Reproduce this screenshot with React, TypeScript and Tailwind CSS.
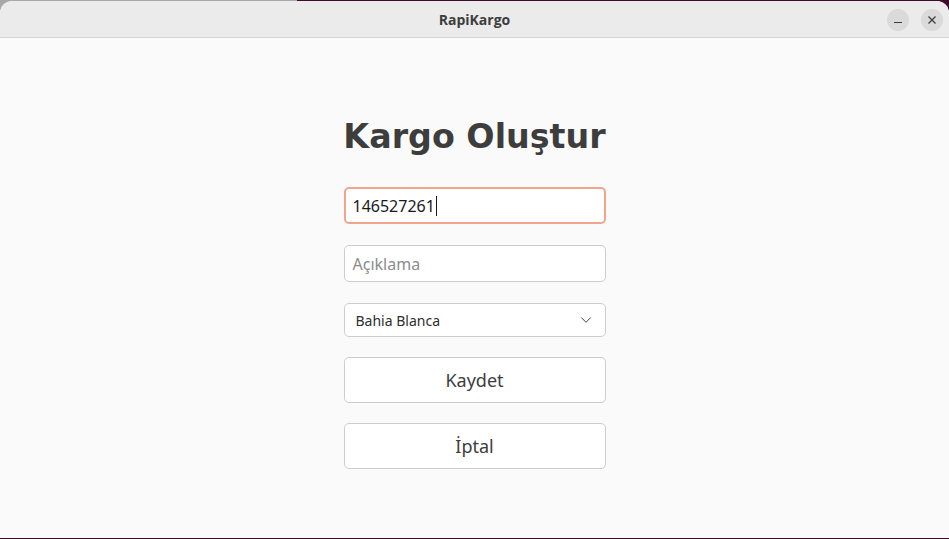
import { ChevronDown } from "lucide-react";

function TitleBar() {
  return (
    <div className="relative flex h-[37px] items-center justify-center rounded-t-[12px] border-b border-[#d6d6d6] bg-[#ebebeb]">
      <span className="text-[14px] font-bold text-[#3d3d3d] [font-family:'Open_Sans',sans-serif]">RapiKargo</span>
      <div className="absolute right-[6px] top-[8px] flex gap-[12px]">
        <div className="flex h-[22px] w-[22px] items-center justify-center rounded-full bg-[#dadada]">
          <div className="mt-[5px] h-[1px] w-[8px] bg-[#3d3d3d]" />
        </div>
        <div className="flex h-[22px] w-[22px] items-center justify-center rounded-full bg-[#dadada]">
          <svg width="10" height="10" viewBox="0 0 10 10" stroke="#3d3d3d" strokeWidth="1.3">
            <path d="M1.5 1.5 8.5 8.5M8.5 1.5 1.5 8.5" />
          </svg>
        </div>
      </div>
    </div>
  );
}

export default function App() {
  return (
    <div className="flex h-[539px] w-[949px] flex-col overflow-hidden bg-[linear-gradient(to_right,#a8a8a8_0_297px,#3b0d2a_297px)]">
      <div className="h-[1px] shrink-0" />
      <div className="flex flex-1 flex-col overflow-hidden rounded-t-[12px] bg-[#fafafa]">
        <TitleBar />
        <main className="flex flex-1 flex-col items-center pt-[79px]">
          <h1 className="text-[33.3px] leading-[40px] font-bold text-[#3d3d3d] [font-family:'DejaVu_Sans',sans-serif]">
            Kargo Oluştur
          </h1>
          <div className="mt-[30px] flex w-[262px] flex-col [font-family:'Noto_Sans',sans-serif]">
            <div className="flex h-[37px] items-center rounded-[5px] border-2 border-[#f2a58e] bg-white px-[7px] text-[16px] text-[#1a1a1a]">
              146527261
              <span className="ml-[1px] h-[20px] w-[1px] bg-[#1a1a1a]" />
            </div>
            <div className="mt-[21px] flex h-[37px] items-center rounded-[5px] border border-[#cdcdcd] bg-white px-[8px] text-[16px] text-[#8c8c8c]">
              Açıklama
            </div>
            <div className="mt-[21px] flex h-[34px] items-center justify-between rounded-[5px] border border-[#cdcdcd] bg-white pl-[11px] pr-[10px] text-[14px] text-[#2e2e2e]">
              Bahia Blanca
              <ChevronDown size={18} strokeWidth={1.3} className="text-[#3d3d3d]" />
            </div>
            <button className="mt-[20px] flex h-[46px] items-center justify-center rounded-[5px] border border-[#cdcdcd] bg-white text-[18px] text-[#3d3d3d]">
              Kaydet
            </button>
            <button className="mt-[20px] flex h-[46px] items-center justify-center rounded-[5px] border border-[#cdcdcd] bg-white text-[18px] text-[#3d3d3d]">
              İptal
            </button>
          </div>
        </main>
      </div>
      <div className="h-[1px] shrink-0 bg-[#3b0d2a]" />
    </div>
  );
}
